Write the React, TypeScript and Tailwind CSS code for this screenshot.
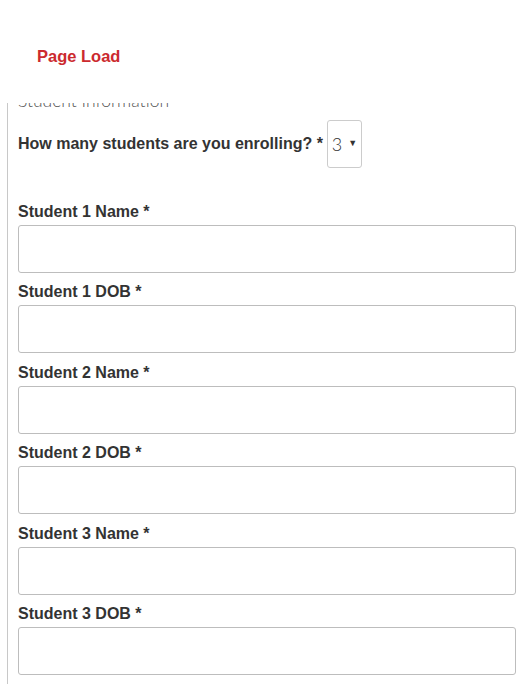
const fields = [
  "Student 1 Name",
  "Student 1 DOB",
  "Student 2 Name",
  "Student 2 DOB",
  "Student 3 Name",
  "Student 3 DOB",
];

function Field({ label }: { label: string }) {
  return (
    <div className="mb-[9.4px]">
      <label className="mb-[3px] block text-[16px] font-bold leading-[20px] text-[#333]">
        {label} *
      </label>
      <input
        type="text"
        className="block h-[48px] w-[498px] rounded-[3px] border border-[#bdbdbd] bg-white"
      />
    </div>
  );
}

export default function App() {
  return (
    <div
      className="h-[684px] w-[524px] overflow-hidden bg-white"
      style={{ fontFamily: '"Liberation Sans", Arial, sans-serif' }}
    >
      <div className="pl-[37px] pt-[44px]">
        <h1 className="text-[16.5px] font-bold leading-[24px] text-[#cc2a2f]">
          Page Load
        </h1>
      </div>

      {/* fieldset, scrolled so the legend is cut off */}
      <div className="ml-[7px] mt-[35px] h-[581px] overflow-hidden border-l border-[#c8c8c8] pl-[10px]">
        <h2 className="-mt-[14px] font-['Lato',sans-serif] text-[17.5px] font-light leading-[24px] text-[#555]">
          Student Information
        </h2>

        <div className="mt-[7px] flex items-center">
          <span className="mr-[4px] text-[16px] font-bold text-[#333]">
            How many students are you enrolling? *
          </span>
          <div className="flex h-[48px] w-[35px] items-center justify-center gap-[6px] rounded-[3px] border border-[#cccccc] bg-white">
            <span className="font-['Lato',sans-serif] text-[18px] font-light text-[#333]">3</span>
            <span className="text-[9px] text-[#333]">▼</span>
          </div>
        </div>

        <div className="mt-[34px]">
          {fields.map((f) => (
            <Field key={f} label={f} />
          ))}
        </div>
      </div>
    </div>
  );
}
